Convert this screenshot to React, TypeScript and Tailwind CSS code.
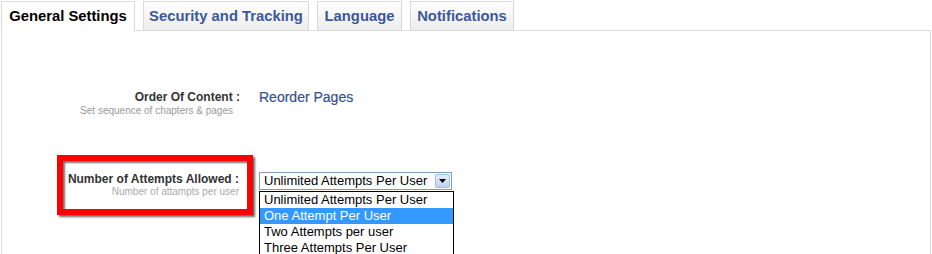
import { useState } from "react"

const tabs = [
  { label: "General Settings", w: "w-[134px]" },
  { label: "Security and Tracking", w: "w-[166px]" },
  { label: "Language", w: "w-[85px]" },
  { label: "Notifications", w: "w-[104px]" },
]

const options = [
  "Unlimited Attempts Per User",
  "One Attempt Per User",
  "Two Attempts per user",
  "Three Attempts Per User",
]

export default function App() {
  const [active] = useState(0)
  const [hover] = useState(1)

  return (
    <div className="relative w-[932px] h-[254px] overflow-hidden bg-white pl-px pt-px font-['Liberation_Sans',Arial,sans-serif]">
      {/* Tabs */}
      <div className="flex items-end gap-2">
        {tabs.map((t, i) =>
          i === active ? (
            <div
              key={t.label}
              className={`${t.w} relative z-10 -mb-px h-[30px] border border-b-0 border-[#d9d9d9] bg-white pt-[5px] text-center text-[14.8px] leading-[18px] font-bold text-black`}
            >
              {t.label}
            </div>
          ) : (
            <div
              key={t.label}
              className={`${t.w} h-[29px] border border-b-0 border-[#d9d9d9] bg-gradient-to-b from-white to-[#ececec] pt-[5px] text-center text-[14.8px] leading-[18px] font-bold text-[#3b5998]`}
            >
              {t.label}
            </div>
          )
        )}
      </div>

      {/* Panel */}
      <div className="mr-px h-[260px] border border-[#dcdcdc] pt-[58px]">
        {/* Order of content */}
        <div className="flex">
          <div className="w-[238px] pt-px text-right">
            <div className="text-[12px] leading-[14px] font-bold text-[#333]">Order Of Content :</div>
            <div className="pr-[7px] text-[10px] leading-[14px] text-[#999]">Set sequence of chapters &amp; pages</div>
          </div>
          <div className="ml-[19px] text-[14px] leading-[16px] text-[#34508f] [-webkit-text-stroke:0.2px_#34508f]">Reorder Pages</div>
        </div>

        {/* Attempts */}
        <div className="mt-[54px] flex">
          <div className="w-[238px] pr-[1px] text-right">
            <div className="text-[12px] leading-[14px] font-bold text-[#333]">Number of Attempts Allowed :</div>
            <div className="text-[10px] leading-[12px] text-[#aaa]">Number of attampts per user</div>
          </div>
          <div className="relative ml-[19px]">
            <div className="flex h-[18px] w-[193px] items-center border border-[#7f9db9] bg-white">
              <span className="flex-1 pl-1 text-[13px] leading-[16px] text-black">{options[0]}</span>
              <span className="m-px flex h-[14px] w-[15px] items-center justify-center rounded-[2px] border border-[#a6bedf] bg-gradient-to-b from-[#e6eefc] to-[#bcd0f1]">
                <svg width="7" height="4" viewBox="0 0 7 4">
                  <path d="M0 0h7L3.5 4z" fill="#000" />
                </svg>
              </span>
            </div>
            {/* Open list */}
            <div className="absolute left-0 top-[19px] w-[195px] border border-black bg-white">
              {options.map((o, i) => (
                <div
                  key={o}
                  className={
                    i === hover
                      ? "h-[16px] bg-[#3399ff] pl-1 text-[13px] leading-[16px] text-white"
                      : "h-[16px] pl-1 text-[13px] leading-[16px] text-black"
                  }
                >
                  {o}
                </div>
              ))}
            </div>
          </div>
        </div>
      </div>

      {/* Highlight annotation */}
      <div className="absolute left-[57px] top-[155px] h-[60px] w-[196px] border-[6px] border-[#ff0000] shadow-[2px_2px_2px_rgba(0,0,0,0.6),inset_2px_2px_2px_rgba(0,0,0,0.55)]" />
    </div>
  )
}
